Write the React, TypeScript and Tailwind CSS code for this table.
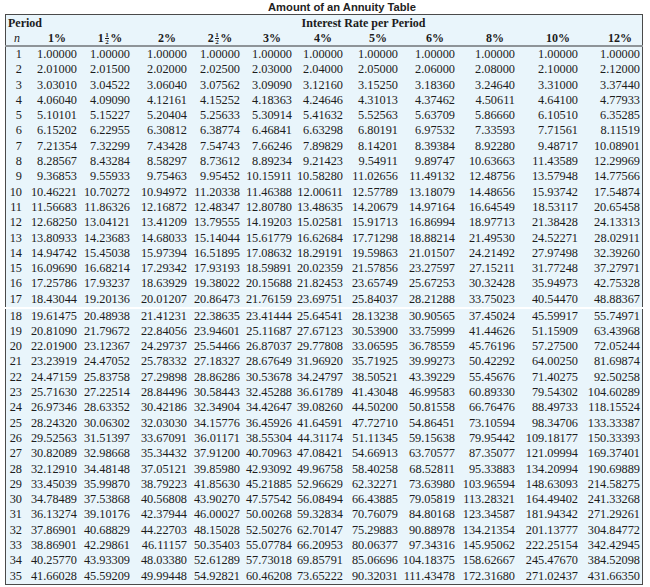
import React from "react";

// columns: n, 1%, 1½%, 2%, 2½%, 3%, 4%, 5%, 6%, 8%, 10%, 12%
const GRID =
    "grid grid-cols-[16px_55px_53px_57px_53px_52px_51px_55px_57px_60px_63px_62px]";

const DATA = `
1.00000 1.00000 1.00000 1.00000 1.00000 1.00000 1.00000 1.00000 1.00000 1.00000 1.00000
2.01000 2.01500 2.02000 2.02500 2.03000 2.04000 2.05000 2.06000 2.08000 2.10000 2.12000
3.03010 3.04522 3.06040 3.07562 3.09090 3.12160 3.15250 3.18360 3.24640 3.31000 3.37440
4.06040 4.09090 4.12161 4.15252 4.18363 4.24646 4.31013 4.37462 4.50611 4.64100 4.77933
5.10101 5.15227 5.20404 5.25633 5.30914 5.41632 5.52563 5.63709 5.86660 6.10510 6.35285
6.15202 6.22955 6.30812 6.38774 6.46841 6.63298 6.80191 6.97532 7.33593 7.71561 8.11519
7.21354 7.32299 7.43428 7.54743 7.66246 7.89829 8.14201 8.39384 8.92280 9.48717 10.08901
8.28567 8.43284 8.58297 8.73612 8.89234 9.21423 9.54911 9.89747 10.63663 11.43589 12.29969
9.36853 9.55933 9.75463 9.95452 10.15911 10.58280 11.02656 11.49132 12.48756 13.57948 14.77566
10.46221 10.70272 10.94972 11.20338 11.46388 12.00611 12.57789 13.18079 14.48656 15.93742 17.54874
11.56683 11.86326 12.16872 12.48347 12.80780 13.48635 14.20679 14.97164 16.64549 18.53117 20.65458
12.68250 13.04121 13.41209 13.79555 14.19203 15.02581 15.91713 16.86994 18.97713 21.38428 24.13313
13.80933 14.23683 14.68033 15.14044 15.61779 16.62684 17.71298 18.88214 21.49530 24.52271 28.02911
14.94742 15.45038 15.97394 16.51895 17.08632 18.29191 19.59863 21.01507 24.21492 27.97498 32.39260
16.09690 16.68214 17.29342 17.93193 18.59891 20.02359 21.57856 23.27597 27.15211 31.77248 37.27971
17.25786 17.93237 18.63929 19.38022 20.15688 21.82453 23.65749 25.67253 30.32428 35.94973 42.75328
18.43044 19.20136 20.01207 20.86473 21.76159 23.69751 25.84037 28.21288 33.75023 40.54470 48.88367
19.61475 20.48938 21.41231 22.38635 23.41444 25.64541 28.13238 30.90565 37.45024 45.59917 55.74971
20.81090 21.79672 22.84056 23.94601 25.11687 27.67123 30.53900 33.75999 41.44626 51.15909 63.43968
22.01900 23.12367 24.29737 25.54466 26.87037 29.77808 33.06595 36.78559 45.76196 57.27500 72.05244
23.23919 24.47052 25.78332 27.18327 28.67649 31.96920 35.71925 39.99273 50.42292 64.00250 81.69874
24.47159 25.83758 27.29898 28.86286 30.53678 34.24797 38.50521 43.39229 55.45676 71.40275 92.50258
25.71630 27.22514 28.84496 30.58443 32.45288 36.61789 41.43048 46.99583 60.89330 79.54302 104.60289
26.97346 28.63352 30.42186 32.34904 34.42647 39.08260 44.50200 50.81558 66.76476 88.49733 118.15524
28.24320 30.06302 32.03030 34.15776 36.45926 41.64591 47.72710 54.86451 73.10594 98.34706 133.33387
29.52563 31.51397 33.67091 36.01171 38.55304 44.31174 51.11345 59.15638 79.95442 109.18177 150.33393
30.82089 32.98668 35.34432 37.91200 40.70963 47.08421 54.66913 63.70577 87.35077 121.09994 169.37401
32.12910 34.48148 37.05121 39.85980 42.93092 49.96758 58.40258 68.52811 95.33883 134.20994 190.69889
33.45039 35.99870 38.79223 41.85630 45.21885 52.96629 62.32271 73.63980 103.96594 148.63093 214.58275
34.78489 37.53868 40.56808 43.90270 47.57542 56.08494 66.43885 79.05819 113.28321 164.49402 241.33268
36.13274 39.10176 42.37944 46.00027 50.00268 59.32834 70.76079 84.80168 123.34587 181.94342 271.29261
37.86901 40.68829 44.22703 48.15028 52.50276 62.70147 75.29883 90.88978 134.21354 201.13777 304.84772
38.86901 42.29861 46.11157 50.35403 55.07784 66.20953 80.06377 97.34316 145.95062 222.25154 342.42945
40.25770 43.93309 48.03380 52.61289 57.73018 69.85791 85.06696 104.18375 158.62667 245.47670 384.52098
41.66028 45.59209 49.99448 54.92821 60.46208 73.65222 90.32031 111.43478 172.31680 271.02437 431.66350
`
    .trim()
    .split("\n")
    .map((line) => line.trim().split(/\s+/));

function Half({ whole }: { whole: string }) {
    return (
        <span className="inline-flex items-center h-[14px]">
            {whole}
            <span className="flex flex-col items-center text-[7px] leading-[6px] mx-[1px]">
                <span className="border-b border-current px-[0.5px]">1</span>
                <span>2</span>
            </span>
            %
        </span>
    );
}

const HEADERS: React.ReactNode[] = [
    "1%",
    <Half whole="1" />,
    "2%",
    <Half whole="2" />,
    "3%",
    "4%",
    "5%",
    "6%",
    "8%",
    "10%",
    "12%",
];

function Row({ n, values }: { n: number; values: string[] }) {
    return (
        <div className={`${GRID} h-[15.3px] leading-[15.3px]`}>
            <div className="text-right">{n}</div>
            {values.map((v, i) => (
                <div key={i} className="text-right whitespace-nowrap">
                    {v}
                </div>
            ))}
        </div>
    );
}

export default function App() {
    return (
        <div className="w-[650px] h-[587px] bg-white text-[#1c1c1c] overflow-hidden font-['Liberation_Serif','Times_New_Roman',serif]">
            {/* Title */}
            <div className="h-[14px] leading-[14px] text-center pl-[34px] text-[11.2px] font-bold text-[#222] font-['Liberation_Sans',Arial,sans-serif]">
                Amount of an Annuity Table
            </div>

            {/* Top half */}
            <div className="ml-[5px] w-[638px] pr-[2px] bg-[#e9f5fb] border-t border-l border-r border-[#4a4a4a] text-[12.3px]">
                {/* Period / Interest Rate */}
                <div className={`${GRID} h-[16px] leading-[16px] font-bold text-[12px]`}>
                    <div className="col-span-2 pl-[2px]">Period</div>
                    <div className="col-span-10 text-center pl-[10px]">Interest Rate per Period</div>
                </div>
                {/* Column headers */}
                <div className={`${GRID} h-[14px] leading-[14px] font-bold text-[12px] overflow-hidden`}>
                    <div className="text-right pr-[2px] italic font-normal">n</div>
                    {HEADERS.map((h, i) => (
                        <div key={i} className="flex justify-end">
                            <span className="w-[40px] flex justify-center">{h}</span>
                        </div>
                    ))}
                </div>
            </div>
            <div className="ml-[5px] w-[638px] h-[2px] bg-[#8e9498]" />

            <div className="ml-[5px] w-[638px] pr-[2px] bg-[#e9f5fb] border-l border-r border-[#4a4a4a] text-[12.3px]">
                {DATA.slice(0, 17).map((vals, i) => (
                    <Row key={i} n={i + 1} values={vals} />
                ))}
            </div>

            <div className="h-[1.5px] bg-white" />

            {/* Bottom half */}
            <div className="ml-[5px] w-[638px] pr-[2px] bg-[#e9f5fb] border-l border-r border-b border-[#4a4a4a] text-[12.3px]">
                {DATA.slice(17).map((vals, i) => (
                    <Row key={i} n={i + 18} values={vals} />
                ))}
            </div>
        </div>
    );
}
